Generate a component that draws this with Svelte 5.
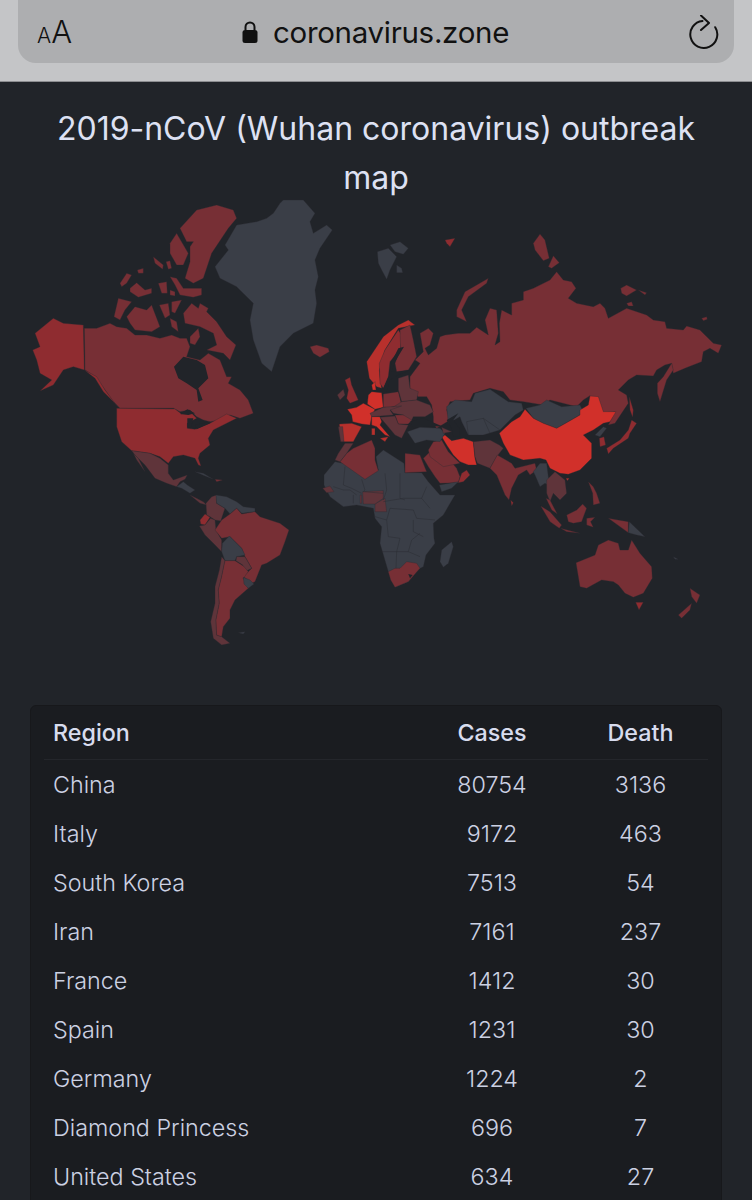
<script>
  const fills = { g: '#3a3e47', r: '#772f35', m: '#8f2c30', b: '#d1302a', o: '#b8302c', d: '#5f343a', k: '#212429' }

  // each zone: offset of the zone, then shapes in 3x units
  const zones = [
    { x: 370, y: 220, shapes: [
      ['r', '120,470 150,430 135,420 160,395 150,340 175,325 190,340 180,375 165,385 175,405 200,385 210,350 225,345 265,340 300,340 320,322 355,345 345,300 360,265 380,270 385,340 375,375 390,365 388,310 395,270 425,285 425,250 460,240 460,215 490,205 540,180 560,155 580,180 605,185 618,205 595,235 620,250 670,260 690,250 705,265 715,295 770,265 830,285 850,300 885,305 890,325 940,330 950,318 990,330 1030,370 1055,375 1045,400 1020,385 1000,395 995,425 945,445 910,460 905,430 885,435 860,450 850,468 800,465 775,480 745,510 770,525 775,550 735,610 715,615 735,575 690,580 660,527 640,540 620,560 540,540 520,555 460,545 420,540 400,515 360,505 310,520 300,540 240,545 230,570 240,600 200,625 190,610 190,590 185,555 170,530 145,530 120,510'],
      ['r', '862,490 880,470 905,430 910,450 890,480 870,545 862,520'],
      ['r', '260,270 285,215 355,175 350,190 295,230 275,270 290,305 260,290'],
      ['r', '490,70 510,42 525,60 538,115 520,122 495,90'],
      ['r', '535,140 550,107 568,128 545,145'],
      ['r', '752,205 770,195 800,210 770,228 755,220'],
      ['r', '805,210 830,218 825,225'],
      ['r', '770,250 785,245 790,258 775,258'],
      ['r', '995,295 1010,290 1012,298 1000,302'],
      ['m', '225,60 255,55 240,80 230,70'],
      ['g', '22,95 55,85 80,110 60,150 50,178 35,150 25,130'],
      ['g', '60,75 90,65 115,85 100,103 75,95'],
      ['g', '80,135 95,145 98,158 80,158']
    ] },
    { x: 20, y: 190, shapes: [
      ['g', '790,30 850,30 885,70 870,95 880,130 920,105 937,120 900,175 885,210 895,260 885,300 890,340 880,400 820,430 780,470 755,545 725,520 700,450 690,390 700,340 650,290 600,265 585,230 625,180 615,165 650,105 710,95 740,85 760,70 780,40'],
      ['r', '480,115 530,60 590,45 640,60 650,85 625,115 575,190 560,235 550,265 520,280 495,265 510,215 510,170 520,155 500,155'],
      ['r', '450,160 470,130 505,190 490,225 470,225 450,190'],
      ['r', '300,280 320,250 335,255 320,280 305,290'],
      ['r', '352,240 370,235 370,250 355,250'],
      ['r', '400,200 430,225 428,238 405,220'],
      ['r', '438,215 450,212 455,235 445,238'],
      ['r', '330,295 350,278 375,300 395,295 395,310 355,322 330,305'],
      ['r', '415,280 440,275 442,310 425,310'],
      ['r', '450,300 465,305 465,318 450,315'],
      ['r', '450,260 470,265 490,295 545,295 545,315 520,322 480,315 465,285'],
      ['r', '282,380 295,325 335,335 315,360 300,390'],
      ['r', '320,380 345,350 380,360 395,345 420,410 395,425 345,420 330,400'],
      ['r', '418,345 445,340 450,375 435,385'],
      ['r', '455,335 485,330 465,370 455,365'],
      ['r', '450,385 470,395 475,425 455,410'],
      ['r', '490,370 515,340 535,355 540,340 565,355 560,365 590,395 620,440 648,465 630,510 610,490 560,480 590,465 580,430 540,410 495,400'],
      ['r', '510,440 535,415 540,440 525,465 510,460'],
      ['r', '193,415 230,415 270,400 290,410 320,415 345,435 380,435 420,445 455,435 480,445 500,445 510,470 500,500 540,510 565,490 600,510 620,560 635,560 625,580 660,600 685,630 700,670 660,685 630,675 600,690 570,695 550,690 530,680 510,660 480,665 460,655 300,655 280,635 255,600 225,560 195,540'],
      ['k', '462,530 490,500 530,510 555,525 565,565 535,595 548,630 535,635 530,600 500,580 475,565'],
      ['m', '45,430 100,385 130,400 190,405 193,540 160,530 130,540 100,585 60,603 95,570 60,550 50,510 38,480 60,470'],
      ['m', '193,540 230,560 255,600 300,660 285,640 250,605 225,565'],
      ['r', '870,470 890,465 925,475 928,485 900,502 880,490']
    ] },
    { x: 100, y: 390, shapes: [
      ['m', '50,55 225,57 245,72 265,60 290,85 262,100 262,115 285,118 330,100 380,72 410,85 370,105 340,120 325,145 330,165 300,190 295,205 303,228 295,225 285,205 250,195 220,200 205,220 180,200 150,190 95,182 65,155 50,110'],
      ['k', '240,72 262,58 285,70 265,75'],
      ['k', '262,85 280,85 272,115 262,112'],
      ['k', '285,105 330,95 330,100 290,118'],
      ['d', '95,182 150,190 180,205 205,225 205,250 220,270 262,255 255,268 240,275 230,290 200,280 165,265 135,225 105,195'],
      ['d', '100,190 115,205 135,245 110,210'],
      ['g', '230,290 250,275 262,285 285,300 270,310 245,295'],
      ['d', '270,315 290,325 310,335 320,345 300,340'],
      ['g', '285,245 310,250 340,268 315,258'],
      ['r', '345,268 368,270 350,275']
    ] },
    { x: 180, y: 440, shapes: [
      ['d', '78,190 95,170 110,165 110,190 135,205 125,235 122,243 105,240 90,230 80,225'],
      ['g', '108,165 140,170 170,185 190,200 225,205 225,215 185,220 170,205 150,222 135,205 110,190'],
      ['m', '60,240 75,222 90,232 75,255 62,252'],
      ['d', '58,258 75,255 92,235 105,240 108,270 125,300 125,335 100,310 75,285'],
      ['r', '105,270 125,240 150,222 170,205 185,222 225,215 240,230 300,250 327,270 315,305 300,345 260,370 245,375 225,425 215,430 190,410 215,385 195,350 185,325 150,290 125,295'],
      ['g', '127,310 148,288 185,325 195,345 170,350 165,362 135,362 125,335'],
      ['d', '170,350 195,350 215,385 195,395 188,375 168,362'],
      ['d', '125,350 135,362 125,410 115,450 118,490 108,540 110,585 125,590 150,610 125,615 100,595 92,545 105,490 105,440 118,390'],
      ['r', '135,362 165,362 190,378 205,395 190,415 205,445 165,480 150,510 150,535 130,560 125,590 110,585 108,540 118,490 115,450 125,410'],
      ['g', '190,412 210,420 222,432 205,445 192,432'],
      ['g', '175,578 195,575 190,582']
    ] },
    { x: 320, y: 440, shapes: [
      ['g', '12,105 45,65 175,90 168,50 190,30 252,70 255,98 305,98 325,125 360,165 405,165 370,225 340,250 342,295 345,310 318,345 310,380 290,390 265,425 225,442 205,395 180,310 185,260 165,235 160,205 110,195 70,200 30,170 12,135'],
      ['r', '60,65 80,40 100,25 155,0 165,25 165,60 175,92 135,118'],
      ['d', '45,60 55,40 75,10 100,10 80,40 60,65'],
      ['r', '255,40 300,45 320,95 255,98'],
      ['d', '165,192 195,175 200,215 165,215'],
      ['d', '128,155 190,152 190,175 165,192 130,192'],
      ['d', '8,145 30,138 42,155 20,158'],
      ['d', '120,165 125,165 125,190 120,190'],
      ['r', '205,395 225,385 240,385 260,365 290,370 300,385 265,425 225,442 212,420'],
      ['k', '265,402 278,405 270,415'],
      ['g', '360,365 365,330 395,305 400,320 385,370 370,382'],
      ['r', '310,55 330,35 355,20 385,55 410,85 420,110 415,128 360,130 345,110 325,80'],
      ['m', '415,128 425,100 440,90 450,105 430,125'],
      ['g', '358,135 415,125 395,145 365,155']
    ], lines: [
      '75,80 70,135 95,145 125,160', '125,118 135,150 130,155', '195,100 200,150 190,180',
      '240,100 240,175 255,180', '320,140 305,175 330,205', '130,155 190,160', '190,185 250,175 305,175',
      '210,205 280,210 290,235', '165,230 200,240 210,205', '200,240 205,290 240,295', '280,240 280,275 310,290',
      '240,295 230,335 265,335 275,300 300,280', '185,335 230,335', '230,335 228,385', '265,335 300,350',
      '345,240 290,235', '40,140 70,150 90,150 110,165', '100,165 100,190'
    ] },
    { x: 440, y: 380, shapes: [
      ['g', '20,80 45,60 95,65 105,40 150,28 205,65 245,70 250,90 225,105 180,150 130,165 85,165 65,125 60,110 25,130'],
      ['k', '20,120 55,100 40,120 58,145 60,170 40,170 35,145'],
      ['g', '258,85 300,75 320,60 365,80 420,75 430,95 420,105 385,125 350,145 310,130 280,115'],
      ['r', '-35,210 -20,185 5,180 25,215 60,250 10,260 -30,230'],
      ['b', '178,160 215,125 240,110 255,88 280,115 310,130 350,145 385,125 420,105 420,90 445,75 450,48 475,50 490,95 528,95 510,125 490,130 460,150 430,165 455,190 455,235 420,270 385,283 360,280 330,265 318,240 300,235 250,240 210,225 190,190'],
      ['b', '5,170 15,165 35,182 70,175 100,185 105,235 110,255 85,255 60,245 40,225 20,195'],
      ['d', '100,185 150,180 178,195 190,205 170,230 150,265 112,250 105,230'],
      ['r', '150,265 172,225 215,250 225,265 285,250 290,270 270,285 260,270 235,285 215,325 207,360 195,345 170,285'],
      ['m', '212,360 220,368 215,378'],
      ['g', '280,275 300,250 320,250 325,290 335,320 315,310 300,320 285,285'],
      ['d', '320,300 345,275 375,300 380,340 360,360 340,340 330,365 320,340'],
      ['g', '465,165 490,140 500,145 480,170'],
      ['m', '478,175 492,170 497,195 480,200'],
      ['m', '500,205 540,180 565,150 575,120 590,130 570,160 565,175 520,205 505,222'],
      ['m', '568,50 580,90 578,112 570,90'],
      ['o', '378,295 388,295 382,302']
    ], lines: ['85,165 80,125 130,115 150,160', '130,115 180,150'] },
    { x: 330, y: 320, shapes: [
      ['o', '110,125 160,50 205,15 235,0 255,15 205,25 165,90 148,150 150,175 155,205 140,200 118,175'],
      ['m', '148,130 165,90 205,30 215,45 212,85 180,125 175,170 160,205 150,190'],
      ['r', '210,30 240,15 250,60 260,110 235,150 200,155 195,130 212,85'],
      ['k', '205,85 222,80 195,125 185,155 205,155 240,150 205,165 180,180 170,215 160,205 178,165 185,125'],
      ['m', '45,180 60,172 65,195 85,240 60,250 50,235 55,210'],
      ['d', '22,225 40,208 45,225 30,240'],
      ['b', '52,268 80,262 100,250 135,268 125,290 120,315 95,312 68,305 65,285'],
      ['b', '125,215 155,218 160,262 135,268 112,252 115,225'],
      ['b', '125,195 135,185 138,210 128,210'],
      ['o', '28,312 65,310 95,320 70,365 42,365 30,345'],
      ['d', '25,320 38,320 42,365 32,365'],
      ['b', '125,290 150,290 155,305 150,315 180,350 165,345 140,320 125,315'],
      ['o', '150,355 175,350 165,365'],
      ['o', '125,325 135,325 135,345 125,345'],
      ['r', '160,222 205,215 215,255 180,262 160,262'],
      ['d', '205,175 235,165 240,205 265,215 260,240 215,245 205,210'],
      ['d', '215,245 260,240 300,255 310,275 285,290 250,290 240,310 220,285 190,280 180,268'],
      ['d', '160,262 215,258 180,270 190,285 125,290 120,280'],
      ['r', '195,285 220,285 245,300 235,312 205,312'],
      ['d', '150,292 195,288 205,312 235,315 215,355 195,345 170,315'],
      ['k', '240,305 280,295 340,320 300,318 250,325'],
      ['g', '232,335 270,322 330,325 345,340 330,365 290,360 255,370'],
      ['d', '335,322 365,335 340,340']
    ] },
    { x: 470, y: 440, shapes: [
      ['r', '212,198 240,215 275,255 268,265 240,245'],
      ['r', '272,265 330,280 290,275'],
      ['r', '290,225 320,210 338,192 350,205 335,245 310,250 295,245'],
      ['r', '350,235 375,232 362,245 370,262 350,255'],
      ['r', '228,175 240,180 262,222 245,210'],
      ['r', '355,125 370,140 380,160 390,190 370,195 368,160'],
      ['r', '415,235 445,240 475,245 475,278 450,260'],
      ['g', '478,245 525,290 500,285 475,278'],
      ['r', '660,445 690,465 680,490 665,470'],
      ['r', '625,525 665,490 660,510 635,535'],
      ['m', '497,487 520,487 507,510'],
      ['r', '318,368 375,345 385,315 415,300 445,310 450,330 475,330 485,300 510,340 545,380 547,415 520,460 490,472 465,460 445,435 430,425 395,420 350,445 330,440 325,410'],
      ['g', '610,350 625,358 615,358']
    ] }
  ]

  const rows = [
    ['China', 80754, 3136],
    ['Italy', 9172, 463],
    ['South Korea', 7513, 54],
    ['Iran', 7161, 237],
    ['France', 1412, 30],
    ['Spain', 1231, 30],
    ['Germany', 1224, 2],
    ['Diamond Princess', 696, 7],
    ['United States', 634, 27]
  ]
</script>

<div class="page">
  <header class="chrome">
    <div class="urlbar">
      <span class="aa"><small>A</small>A</span>
      <span class="address">
        <svg class="lock" viewBox="0 0 16 22" width="16" height="22">
          <path d="M3.5 9V6a4.5 4.5 0 0 1 9 0v3" fill="none" stroke="#111" stroke-width="2" />
          <rect x="0.5" y="9" width="15" height="13" rx="2.5" fill="#111" />
        </svg>
        coronavirus.zone
      </span>
      <svg class="reload" viewBox="0 0 30 34" width="30" height="34">
        <path d="M13.5 6A13.5 13.5 0 1 0 26.2 12.2" fill="none" stroke="#111" stroke-width="2" stroke-linecap="round" />
        <path d="M12 0.5 20 8 12 15" fill="none" stroke="#111" stroke-width="2" stroke-linecap="round" stroke-linejoin="round" />
      </svg>
    </div>
  </header>

  <main>
    <h1>2019-nCoV (Wuhan coronavirus) outbreak map</h1>

    <svg class="map" viewBox="0 196 752 470" width="752" height="470">
      {#each zones as zone}
        <g transform="translate({zone.x} {zone.y}) scale(0.3333)">
          {#each zone.shapes as [c, pts]}
            <polygon points={pts} fill={fills[c]} stroke={c === 'k' ? 'none' : '#2a2b31'} stroke-width="1" stroke-linejoin="round" />
          {/each}
          {#each zone.lines ?? [] as pts}
            <polyline points={pts} fill="none" stroke="#2a2c33" stroke-width="1.5" />
          {/each}
        </g>
      {/each}
    </svg>

    <div class="card">
      <table>
        <thead>
          <tr>
            <th class="region">Region</th>
            <th class="cases">Cases</th>
            <th class="death">Death</th>
          </tr>
        </thead>
        <tbody>
          {#each rows as [region, cases, death]}
            <tr>
              <td class="region">{region}</td>
              <td>{cases}</td>
              <td>{death}</td>
            </tr>
          {/each}
        </tbody>
      </table>
    </div>
  </main>
</div>

<style>
  :global(body) {
    background: #212429;
  }

  .page {
    height: 1200px;
    overflow: hidden;
    font-family: Inter, "Liberation Sans", sans-serif;
    background: #212429;
  }

  .chrome {
    height: 81px;
    background: #c4c5c7;
    border-bottom: 1px solid #8c8d90;
    padding: 0 18px;
  }

  .urlbar {
    height: 63px;
    background: #adaeb0;
    border-radius: 0 0 18px 18px;
    display: flex;
    align-items: center;
    justify-content: space-between;
    padding: 0 15px 0 19px;
    color: #111;
  }

  .aa {
    font-size: 31px;
    line-height: 1;
    font-weight: 300;
  }

  .aa small {
    font-size: 21px;
  }

  .address {
    display: flex;
    align-items: center;
    gap: 15px;
    font-size: 29.5px;
    letter-spacing: -0.3px;
    margin-left: -10px;
  }

  h1 {
    margin: 0;
    padding: 22px 40px 0;
    font-size: 32px;
    line-height: 49px;
    font-weight: 400;
    text-align: center;
    color: #dde1f3;
  }

  .map {
    display: block;
    margin-top: -6px;
  }

  .card {
    margin: 39px 30px 0;
    padding: 0 13px 20px;
    background: #1a1c20;
    border: 1px solid #17181b;
    border-radius: 6px;
  }

  table {
    width: 100%;
    table-layout: fixed;
    border-collapse: collapse;
    font-size: 23.3px;
    color: #ccd1e3;
  }

  th, td {
    box-sizing: border-box;
    height: 49px;
    padding: 0;
    text-align: center;
  }

  th {
    height: 53px;
    font-weight: 500;
    color: #d8dcee;
    border-bottom: 1px solid #24262b;
  }

  tbody tr:first-child td {
    height: 50px;
  }

  td {
    font-weight: 300;
  }

  .region {
    text-align: left;
    padding-left: 9px;
    width: 367px;
  }

  .cases {
    width: 162px;
  }

  .death {
    width: 135px;
  }
</style>
